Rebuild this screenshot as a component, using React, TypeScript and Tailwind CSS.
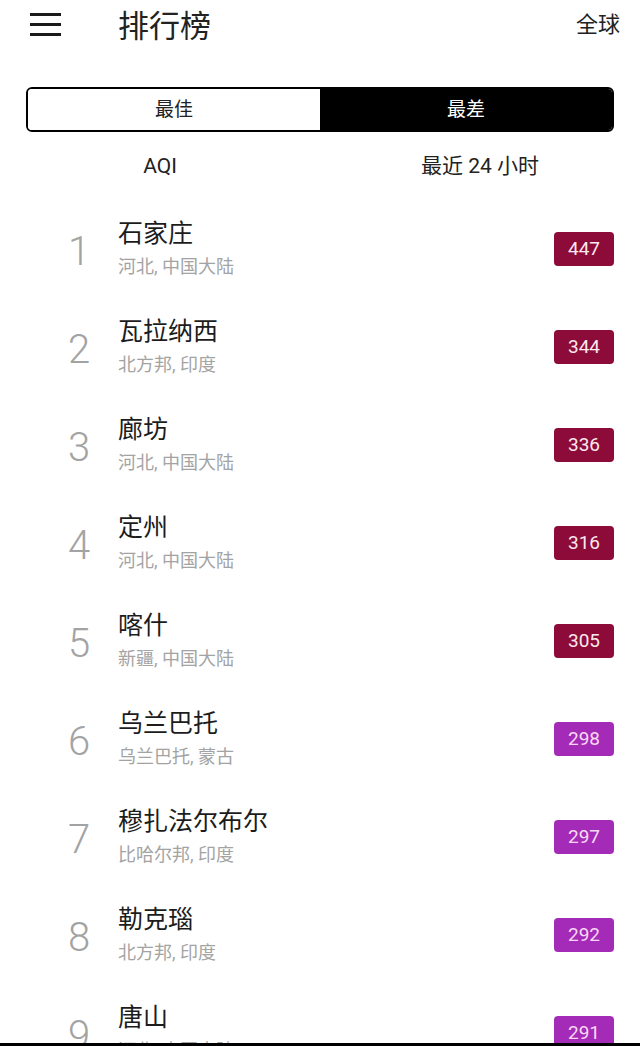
import React from 'react';

type City = {
  name: string;
  region: string;
  aqi: number;
};

const cities: City[] = [
  { name: '石家庄', region: '河北, 中国大陆', aqi: 447 },
  { name: '瓦拉纳西', region: '北方邦, 印度', aqi: 344 },
  { name: '廊坊', region: '河北, 中国大陆', aqi: 336 },
  { name: '定州', region: '河北, 中国大陆', aqi: 316 },
  { name: '喀什', region: '新疆, 中国大陆', aqi: 305 },
  { name: '乌兰巴托', region: '乌兰巴托, 蒙古', aqi: 298 },
  { name: '穆扎法尔布尔', region: '比哈尔邦, 印度', aqi: 297 },
  { name: '勒克瑙', region: '北方邦, 印度', aqi: 292 },
  { name: '唐山', region: '河北, 中国大陆', aqi: 291 },
];

// hazardous (>300) is maroon, very unhealthy is purple
function badgeClass(aqi: number) {
  return aqi > 300 ? 'bg-[#8d0b39] text-[#fbe9ef]' : 'bg-[#a42bb7] text-[#fbd9f6]';
}

export default function App() {
  return (
    <div
      className="w-[640px] h-[1046px] bg-white flex flex-col overflow-hidden text-[#222]"
      style={{ fontFamily: "Roboto, 'Noto Sans CJK SC', sans-serif" }}
    >
      {/* Header */}
      <div className="h-[56px] flex items-center pl-[30px] pr-[20px] shrink-0">
        <div className="w-[31px] flex flex-col gap-[7px] -mt-[8px]">
          <span className="block h-[3px] bg-[#1a1a1a]" />
          <span className="block h-[3px] bg-[#1a1a1a]" />
          <span className="block h-[3px] bg-[#1a1a1a]" />
        </div>
        <h1 className="ml-[57px] text-[31px] leading-none -mt-[4px] text-[#222]">排行榜</h1>
        <span className="ml-auto text-[22px] leading-none -mt-[6px] text-[#222]">全球</span>
      </div>

      {/* Best / worst toggle */}
      <div className="mx-[26px] mt-[31px] h-[45px] flex rounded-[6px] border-2 border-black overflow-hidden shrink-0">
        <button className="flex-1 bg-white text-[19px] text-[#222] pt-[2px]">最佳</button>
        <button className="flex-1 bg-black text-[19px] text-white pt-[2px]">最差</button>
      </div>

      {/* Column labels */}
      <div className="grid grid-cols-2 text-center text-[21px] text-[#222] mt-[19px] leading-[30px] shrink-0">
        <span>AQI</span>
        <span>最近 24 小时</span>
      </div>

      {/* Ranking list */}
      <div className="flex-1 overflow-hidden pt-[19px]">
        {cities.map((c, i) => (
          <div key={c.name} className="h-[98px] flex items-center pr-[26px]">
            <div className="w-[50px] ml-[54px] text-center text-[40px] font-light text-[#a3a3a3] pt-[6px]">
              {i + 1}
            </div>
            <div className="ml-[14px] flex flex-col">
              <span className="text-[25px] leading-[32px] text-[#1c1c1c]">{c.name}</span>
              <span className="text-[18px] leading-[26px] mt-[4px] text-[#a3a3a3]">{c.region}</span>
            </div>
            <div
              className={`ml-auto w-[60px] h-[34px] rounded-[4px] flex items-center justify-center text-[19px] ${badgeClass(c.aqi)}`}
            >
              {c.aqi}
            </div>
          </div>
        ))}
      </div>
      <div className="h-[3px] bg-black shrink-0" />
    </div>
  );
}
